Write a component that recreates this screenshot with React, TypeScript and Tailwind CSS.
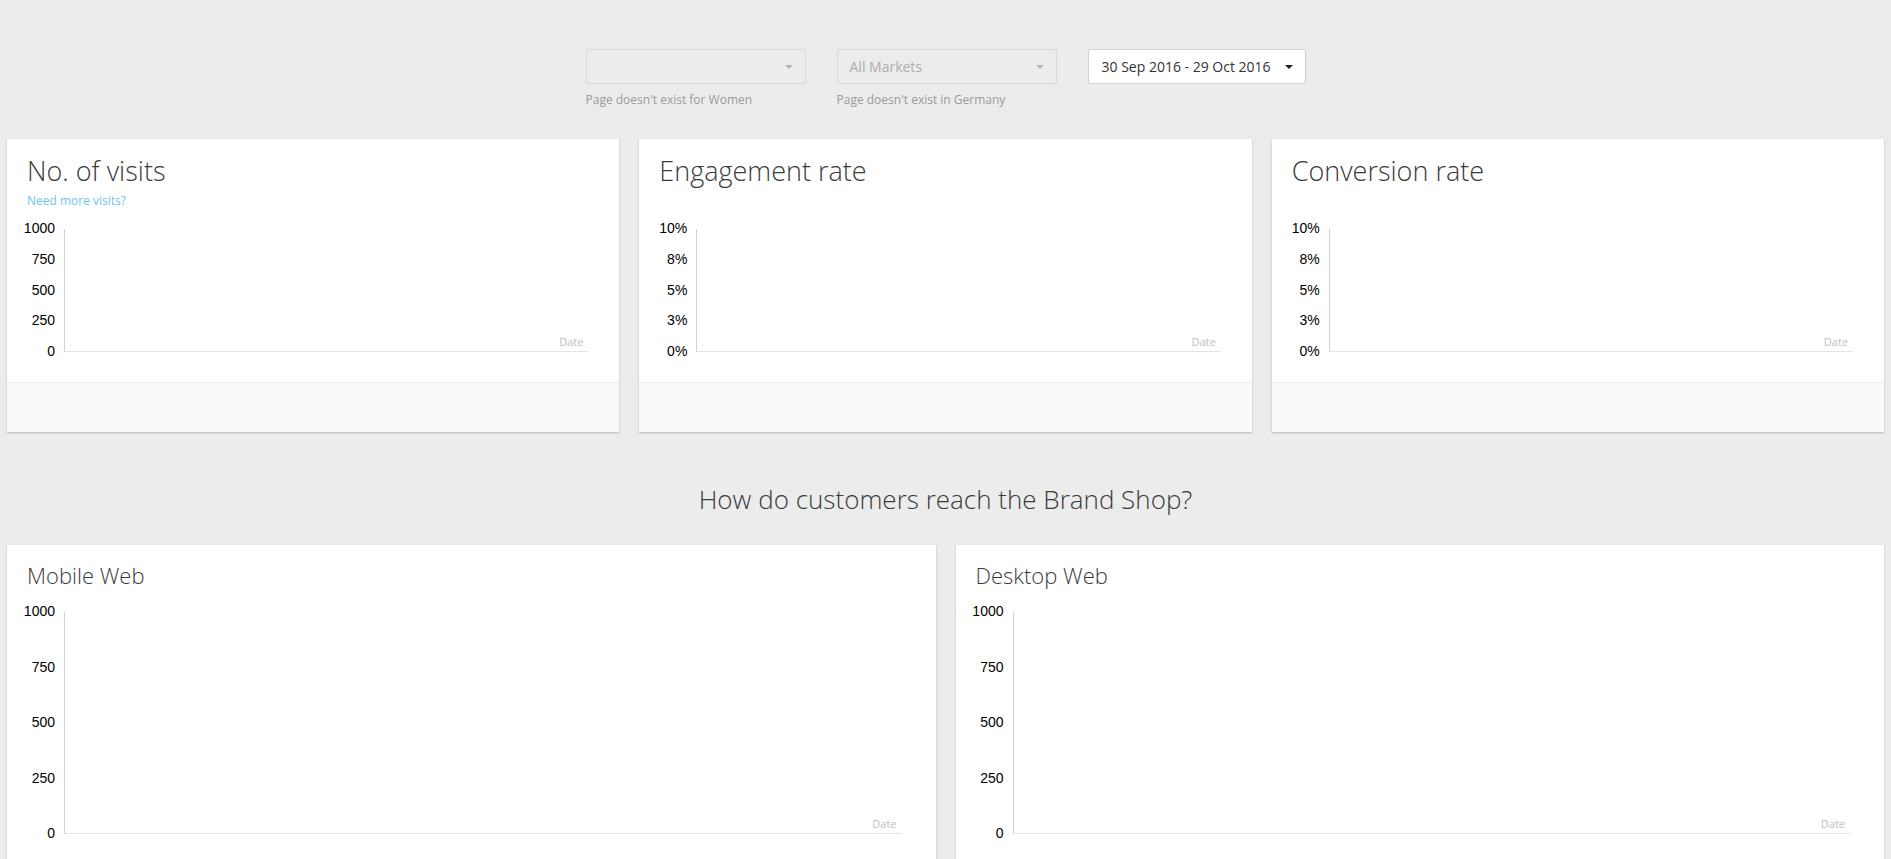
import React from "react";

type ChartProps = {
  ticks: string[];
  height: string;
};

const Caret = ({ className }: { className: string }) => (
  <span className={"inline-block w-0 h-0 border-l-[4px] border-r-[4px] border-t-[4px] border-l-transparent border-r-transparent " + className} />
);

function Chart({ ticks, height }: ChartProps) {
  return (
    <div className="flex">
      <div className="w-[28px] mr-[9px] -mt-[8px] -mb-[6px] flex flex-col items-end justify-between font-['Liberation_Sans',Arial,sans-serif] text-[14px] leading-[14px] text-black">
        {ticks.map((t) => (
          <span key={t} className="whitespace-nowrap">{t}</span>
        ))}
      </div>
      <div className={"flex-1 border-l border-b border-l-[#d2d2d2] border-b-[#e4e4e4] flex items-end justify-end pr-[5px] pb-[3px] " + height}>
        <span className="text-[11px] leading-[13px] text-[#bdbdbd]">Date</span>
      </div>
    </div>
  );
}

function SmallCard({ title, link, ticks }: { title: string; link?: string; ticks: string[] }) {
  return (
    <div className="bg-white shadow-[0_1px_2px_rgba(0,0,0,0.22)] flex flex-col">
      <div className="pl-5 pr-[31px] pt-[15px] pb-[30px]">
        <h2 className="text-[27px] leading-[34px] font-light text-[#3b3b3b]">{title}</h2>
        <div className="mt-[5px] h-[16px] text-[12px] leading-[16px] text-[#6ec2f7]">{link}</div>
        <div className="mt-[20px]">
          <Chart ticks={ticks} height="h-[123px]" />
        </div>
      </div>
      <div className="h-[50px] border-t border-[#ececec] bg-[#f9f9f9]" />
    </div>
  );
}

function BigCard({ title }: { title: string }) {
  return (
    <div className="bg-white shadow-[0_1px_2px_rgba(0,0,0,0.22)]">
      <div className="pl-5 pr-[34px] pt-[17px] pb-[30px]">
        <h3 className="text-[22px] leading-[27px] font-light text-[#3b3b3b]">{title}</h3>
        <div className="mt-[23px]">
          <Chart ticks={["1000", "750", "500", "250", "0"]} height="h-[222px]" />
        </div>
      </div>
      <div className="h-[50px] border-t border-[#ececec] bg-[#f9f9f9]" />
    </div>
  );
}

export default function App() {
  const pct = ["10%", "8%", "5%", "3%", "0%"];
  return (
    <div className="min-h-screen bg-[#ececec] font-['Open_Sans',sans-serif] pt-[49px] px-[7px]">
      <div className="flex justify-center gap-[31px]">
        <div className="w-[220px]">
          <div className="h-[35px] border border-[#d8d8d8] rounded-[2px] flex items-center justify-end pr-[12px]">
            <Caret className="border-t-[#b5b5b5]" />
          </div>
          <p className="mt-[8px] text-[12px] leading-[16px] text-[#9a9a9a]">Page doesn't exist for Women</p>
        </div>
        <div className="w-[220px]">
          <div className="h-[35px] border border-[#d8d8d8] rounded-[2px] flex items-center justify-between pl-[12px] pr-[12px]">
            <span className="text-[14px] text-[#adadad]">All Markets</span>
            <Caret className="border-t-[#b5b5b5]" />
          </div>
          <p className="mt-[8px] text-[12px] leading-[16px] text-[#9a9a9a]">Page doesn't exist in Germany</p>
        </div>
        <div className="w-[218px]">
          <button className="w-full h-[35px] bg-white border border-[#d0d0d0] rounded-[2px] flex items-center justify-between pl-[13px] pr-[12px]">
            <span className="text-[14px] text-[#333]">30 Sep 2016 - 29 Oct 2016</span>
            <Caret className="border-t-[#222]" />
          </button>
        </div>
      </div>

      <div className="mt-[31px] grid grid-cols-3 gap-5">
        <SmallCard title="No. of visits" link="Need more visits?" ticks={["1000", "750", "500", "250", "0"]} />
        <SmallCard title="Engagement rate" ticks={pct} />
        <SmallCard title="Conversion rate" ticks={pct} />
      </div>

      <h2 className="mt-[51px] text-center text-[26px] leading-[33px] font-light text-[#3b3b3b]">How do customers reach the Brand Shop?</h2>

      <div className="mt-[29px] grid grid-cols-2 gap-5">
        <BigCard title="Mobile Web" />
        <BigCard title="Desktop Web" />
      </div>
    </div>
  );
}
